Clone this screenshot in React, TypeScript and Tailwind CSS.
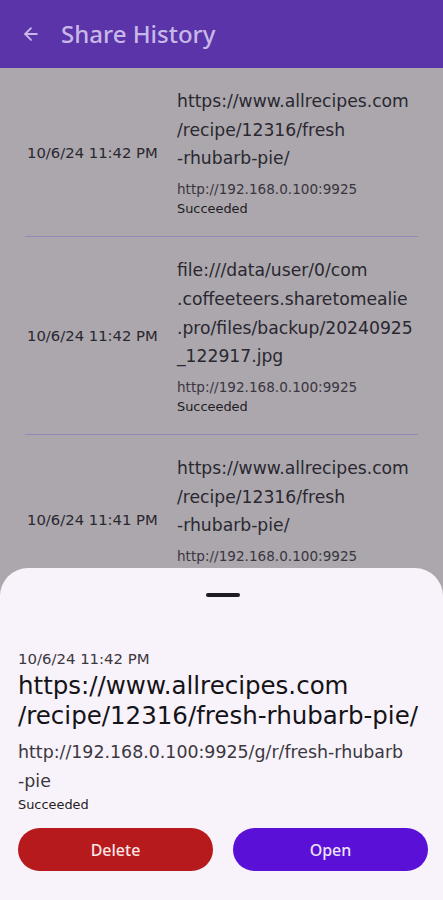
import { ArrowLeft } from 'lucide-react'

interface ShareItem {
  date: string
  lines: string[]
  server: string
  status?: string
}

const ITEMS: ShareItem[] = [
  {
    date: '10/6/24 11:42 PM',
    lines: ['https://www.allrecipes.com', '/recipe/12316/fresh', '-rhubarb-pie/'],
    server: 'http://192.168.0.100:9925',
    status: 'Succeeded',
  },
  {
    date: '10/6/24 11:42 PM',
    lines: ['file:///data/user/0/com', '.coffeeteers.sharetomealie', '.pro/files/backup/20240925', '_122917.jpg'],
    server: 'http://192.168.0.100:9925',
    status: 'Succeeded',
  },
  {
    date: '10/6/24 11:41 PM',
    lines: ['https://www.allrecipes.com', '/recipe/12316/fresh', '-rhubarb-pie/'],
    server: 'http://192.168.0.100:9925',
    status: 'Succeeded',
  },
]

const wide = { fontFamily: '"DejaVu Sans", "Noto Sans", sans-serif' }

function Row({ item, last }: { item: ShareItem; last: boolean }) {
  return (
    <div className={`mx-[25px] flex items-center pt-[19px] pb-[17px] ${last ? '' : 'border-b border-[#9389b8]'}`} style={wide}>
      <div className="w-[152px] shrink-0 pl-[2px] text-[14.8px] text-[#2a2730]">{item.date}</div>
      <div className="flex flex-col">
        {item.lines.map((l) => (
          <div key={l} className="text-[17.2px] leading-[28.7px] text-[#2a2730]">{l}</div>
        ))}
        <div className="mt-[6px] text-[13.6px] leading-[20px] text-[#3a3640]">{item.server}</div>
        {item.status && <div className="text-[12.9px] leading-[20px] text-[#1f1c22]">{item.status}</div>}
      </div>
    </div>
  )
}

export default function App() {
  return (
    <div className="relative h-[900px] w-[443px] overflow-hidden bg-[#aba7ad]" style={{ fontFamily: '"Noto Sans", Roboto, sans-serif' }}>
      <div className="flex h-[68px] items-center bg-[#5a34a8] pl-[21px]">
        <ArrowLeft className="h-[20px] w-[20px] text-[#c8b8e8]" strokeWidth={2.2} />
        <div className="ml-[20px] text-[24px] font-medium text-[#c8b8e8]">Share History</div>
      </div>
      <div>
        {ITEMS.map((it, i) => (
          <Row key={i} item={it} last={i === ITEMS.length - 1} />
        ))}
      </div>

      <div className="absolute bottom-0 left-0 right-0 h-[332px] rounded-t-[28px] bg-[#f8f2fa] pl-[18px] pr-[15px]" style={wide}>
        <div className="mx-auto mt-[25px] h-[4px] w-[34px] rounded-full bg-[#1f1b24]" />
        <div className="mt-[52px] text-[14.9px] leading-[20px] text-[#3b3840]">10/6/24 11:42 PM</div>
        <div className="mt-[2px] text-[24.5px] leading-[30px] text-[#141317]">
          <div>https://www.allrecipes.com</div>
          <div>/recipe/12316/fresh-rhubarb-pie/</div>
        </div>
        <div className="mt-[7px] text-[17.4px] leading-[29px] text-[#3b3840]">
          <div>http://192.168.0.100:9925/g/r/fresh-rhubarb</div>
          <div>-pie</div>
        </div>
        <div className="mt-[1px] text-[12.9px] leading-[16px] text-[#1f1c22]">Succeeded</div>
        <div className="mt-[15px] flex gap-[20px]" style={{ fontFamily: '"Noto Sans", Roboto, sans-serif' }}>
          <button className="h-[43px] flex-1 rounded-full bg-[#b71a1c] text-[16px] font-medium text-[#fbe4e4]">Delete</button>
          <button className="h-[43px] flex-1 rounded-full bg-[#5a10d6] text-[16px] font-medium text-[#ece4fb]">Open</button>
        </div>
      </div>
    </div>
  )
}
